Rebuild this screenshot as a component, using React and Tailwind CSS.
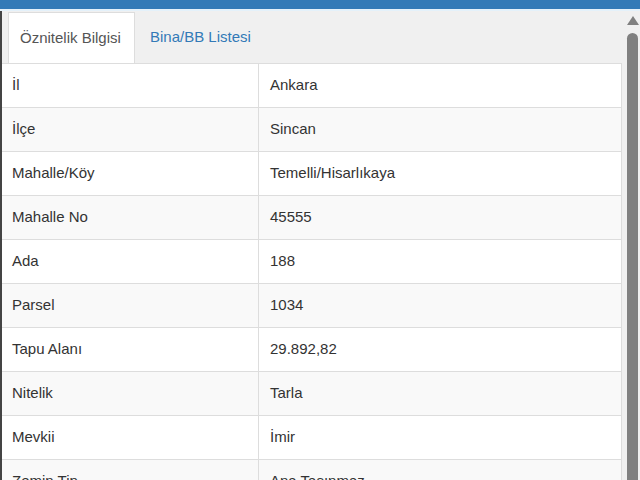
const rows = [
  ['İl', 'Ankara'],
  ['İlçe', 'Sincan'],
  ['Mahalle/Köy', 'Temelli/Hisarlıkaya'],
  ['Mahalle No', '45555'],
  ['Ada', '188'],
  ['Parsel', '1034'],
  ['Tapu Alanı', '29.892,82'],
  ['Nitelik', 'Tarla'],
  ['Mevkii', 'İmir'],
  ['Zemin Tip', 'Ana Taşınmaz'],
]

export default function App() {
  return (
    <div className="h-[480px] w-[640px] overflow-hidden bg-[#f0f0f0] font-['Liberation_Sans',Arial,sans-serif] text-[15px] text-[#333]">
      <div className="h-[9px] bg-[#337ab7]" />
      <div className="h-[2px] bg-[#e4f1fa]" />
      <div className="flex h-[469px]">
        <div className="flex-1 border-l-2 border-[#444] pr-[3px]">
          <div className="flex h-[53px] items-end border-b border-[#ddd] pl-[6px]">
            <div className="flex h-[51px] w-[127px] items-center border border-b-0 border-[#ddd] bg-white pl-[11px] text-[#555]">
              Öznitelik Bilgisi
            </div>
            <div className="flex h-[51px] items-center pl-[15px] text-[#337ab7]">Bina/BB Listesi</div>
          </div>
          <div className="border-r border-[#ddd]">
            {rows.map(([k, v], i) => (
              <div
                key={k}
                className={
                  'flex h-[44px] items-center border-b border-[#ddd] ' + (i % 2 === 0 ? 'bg-white' : 'bg-[#f9f9f9]')
                }
              >
                <div className="flex h-full w-[257px] items-center border-r border-[#ddd] pl-[10px]">{k}</div>
                <div className="pl-[11px]">{v}</div>
              </div>
            ))}
          </div>
        </div>
        <div className="flex w-[15px] flex-col items-center bg-[#f0f0f0] pt-[5px]">
          <svg width="12" height="9" viewBox="0 0 12 9">
            <polygon points="6,0 12,9 0,9" fill="#808080" />
          </svg>
          <div className="mt-[8px] w-[11px] flex-1 rounded-t-full bg-[#808080]" />
        </div>
      </div>
    </div>
  )
}
